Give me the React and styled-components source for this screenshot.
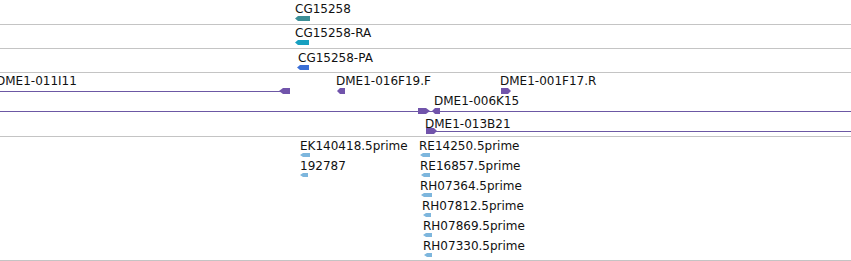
import React from 'react';
import styled, { createGlobalStyle } from 'styled-components';

const GlobalStyle = createGlobalStyle`
  html, body {
    margin: 0;
    padding: 0;
    background: #fff;
    overflow: hidden;
  }
  body {
    font-family: "DejaVu Sans", "Liberation Sans", sans-serif;
  }
`

const Browser = styled.div`
  width: 851px;
  display: flex;
  flex-direction: column;
`

const Track = styled.div`
  position: relative;
  height: ${p => p.$h}px;
  border-bottom: 1px solid #c4c4c4;
  overflow: hidden;
`

const Label = styled.span`
  position: absolute;
  left: ${p => p.$x}px;
  top: ${p => p.$y}px;
  font-size: 12px;
  line-height: 14px;
  color: #111;
  white-space: nowrap;
`

const Line = styled.div`
  position: absolute;
  left: ${p => p.$x}px;
  top: ${p => p.$y}px;
  width: ${p => p.$w}px;
  height: 1px;
  background: #6c58a4;
`

const Glyph = styled.svg`
  position: absolute;
  left: ${p => p.$x}px;
  top: ${p => p.$y}px;
  display: block;
`

const PURPLE = '#7154ab'
const EST = '#7db6dd'

// block with a tapered end on the strand side
const Feature = ({ x, y, w, h = 5, dir = 'L', color, taper = 3 }) => {
  const m = h / 2
  const pts = dir === 'L'
    ? `0,${m} ${taper},0 ${w},0 ${w},${h} ${taper},${h}`
    : `0,0 ${w - taper},0 ${w},${m} ${w - taper},${h} 0,${h}`
  return (
    <Glyph $x={x} $y={y} width={w} height={h} viewBox={`0 0 ${w} ${h}`}>
      <polygon points={pts} fill={color} />
    </Glyph>
  )
}

const tracks = [
  {
    h: 24,
    labels: [{ t: 'CG15258', x: 295, y: 2 }],
    feats: [{ x: 295, y: 16, w: 15, color: '#3c8f96' }],
  },
  {
    h: 23,
    labels: [{ t: 'CG15258-RA', x: 295, y: 1 }],
    feats: [{ x: 295, y: 15, w: 14, color: '#17a0c0' }],
  },
  {
    h: 23,
    labels: [{ t: 'CG15258-PA', x: 298, y: 2 }],
    feats: [{ x: 297, y: 16, w: 12, color: '#3b6fd6' }],
  },
  {
    h: 63,
    labels: [
      { t: 'DME1-011I11', x: -4, y: 1 },
      { t: 'DME1-016F19.F', x: 336, y: 1 },
      { t: 'DME1-001F17.R', x: 500, y: 1 },
      { t: 'DME1-006K15', x: 434, y: 21 },
      { t: 'DME1-013B21', x: 425, y: 44 },
    ],
    lines: [
      { x: 0, y: 18, w: 281 },
      { x: 0, y: 38, w: 851 },
      { x: 436, y: 58, w: 415 },
    ],
    feats: [
      { x: 279, y: 15, w: 11, h: 6, color: PURPLE, taper: 4 },
      { x: 337, y: 15, w: 8, h: 6, color: PURPLE },
      { x: 501, y: 15, w: 10, h: 6, dir: 'R', color: PURPLE },
      { x: 418, y: 35, w: 12, h: 6, dir: 'R', color: PURPLE, taper: 4 },
      { x: 432, y: 35, w: 8, h: 6, color: PURPLE },
      { x: 426, y: 55, w: 11, h: 6, dir: 'R', color: PURPLE },
    ],
  },
  {
    h: 123,
    labels: [
      { t: 'EK140418.5prime', x: 300, y: 2 },
      { t: '192787', x: 300, y: 22 },
      { t: 'RE14250.5prime', x: 419, y: 2 },
      { t: 'RE16857.5prime', x: 420, y: 22 },
      { t: 'RH07364.5prime', x: 420, y: 42 },
      { t: 'RH07812.5prime', x: 422, y: 62 },
      { t: 'RH07869.5prime', x: 423, y: 82 },
      { t: 'RH07330.5prime', x: 423, y: 102 },
    ],
    feats: [
      { x: 300, y: 16, w: 10, h: 4, color: EST },
      { x: 300, y: 36, w: 8, h: 4, color: EST },
      { x: 420, y: 16, w: 10, h: 4, color: EST },
      { x: 421, y: 36, w: 9, h: 4, color: EST },
      { x: 421, y: 56, w: 11, h: 4, color: EST },
      { x: 423, y: 76, w: 8, h: 4, color: EST },
      { x: 423, y: 96, w: 9, h: 4, color: EST },
      { x: 424, y: 116, w: 8, h: 4, color: EST },
    ],
  },
]

export default function App() {
  return (
    <>
      <GlobalStyle />
      <Browser>
        {tracks.map((tr, i) => (
          <Track key={i} $h={tr.h}>
            {(tr.lines || []).map((l, j) => (
              <Line key={'l' + j} $x={l.x} $y={l.y} $w={l.w} />
            ))}
            {tr.feats.map((f, j) => (
              <Feature key={'f' + j} {...f} />
            ))}
            {tr.labels.map((lb, j) => (
              <Label key={'t' + j} $x={lb.x} $y={lb.y}>{lb.t}</Label>
            ))}
          </Track>
        ))}
      </Browser>
    </>
  )
}
